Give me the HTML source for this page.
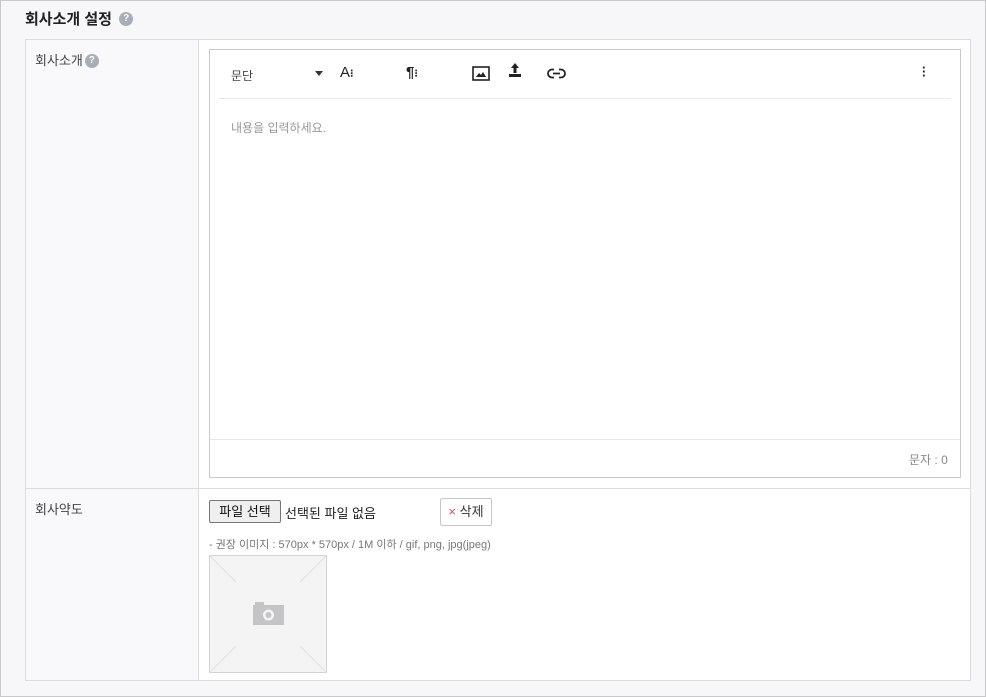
<!DOCTYPE html>
<html><head><meta charset="utf-8"><style>
*{box-sizing:border-box;margin:0;padding:0}
body{width:986px;height:697px;background:#f7f7f9;font-family:"Liberation Sans","Noto Sans CJK KR",sans-serif;color:#333;position:relative;overflow:hidden}
.abs{position:absolute}
.q{display:inline-block;width:14px;height:14px;border-radius:50%;background:#a8aeb8;color:#fff;font-size:10px;font-weight:bold;text-align:center;line-height:14px;vertical-align:middle}
</style></head><body>
<div class="abs" style="left:0;top:0;width:986px;height:697px;border:1px solid #c9c9cc"></div>
<div class="abs" style="left:25px;top:8px;font-size:15px;font-weight:bold;color:#222">회사소개 설정 <span class="q" style="margin-left:3px;margin-top:-3px">?</span></div>
<div class="abs" style="left:25px;top:39px;width:946px;height:642px;border:1px solid #dcdde0;background:#fff"></div>
<div class="abs" style="left:26px;top:40px;width:173px;height:640px;background:#f9f9fb;border-right:1px solid #dcdde0"></div>
<div class="abs" style="left:26px;top:488px;width:944px;height:1px;background:#dcdde0"></div>
<div class="abs" style="left:35px;top:50px;font-size:13px;color:#444">회사소개<span class="q" style="margin-left:2px;margin-top:-2px">?</span></div>
<div class="abs" style="left:35px;top:499px;font-size:13px;color:#444">회사약도</div>
<div class="abs" style="left:209px;top:49px;width:752px;height:429px;border:1px solid #c9cacd"></div>
<div class="abs" style="left:219px;top:98px;width:732px;height:1px;background:#e8e8ea"></div>
<div class="abs" style="left:210px;top:439px;width:750px;height:1px;background:#e8e8ea"></div>
<div class="abs" style="left:231px;top:67px;font-size:12px;color:#444">문단</div>
<div class="abs" style="left:315px;top:71px;width:0;height:0;border-left:4px solid transparent;border-right:4px solid transparent;border-top:5px solid #333"></div>
<div class="abs" style="left:340px;top:64px;font-size:15px;color:#222">A<span style="font-size:11px;font-weight:bold">⁝</span></div>
<div class="abs" style="left:406px;top:64px;font-size:15px;font-weight:bold;color:#222">¶<span style="font-size:11px">⁝</span></div>
<svg class="abs" style="left:472px;top:66px" width="18" height="15" viewBox="0 0 18 15"><rect x="1" y="1" width="16" height="13" fill="none" stroke="#222" stroke-width="1.6"/><path d="M4 11l3-4 2 2 2-3 3 5z" fill="#222"/></svg>
<svg class="abs" style="left:508px;top:62px" width="14" height="16" viewBox="0 0 14 16"><path d="M7 1l4 5H8.5v5h-3V6H3z" fill="#222"/><rect x="1" y="12" width="12" height="3" fill="#222"/></svg>
<svg class="abs" style="left:547px;top:67px" width="19" height="13" viewBox="0 0 19 13"><path d="M7 2.5H5a4 4 0 000 8h2M12 2.5h2a4 4 0 010 8h-2M6 6.5h7" fill="none" stroke="#222" stroke-width="1.8"/></svg>
<div class="abs" style="left:922px;top:66px;width:3px;font-size:13px;line-height:4px;color:#222;font-weight:bold">·<br>·<br>·</div>
<div class="abs" style="left:231px;top:119px;font-size:12px;color:#999">내용을 입력하세요.</div>
<div class="abs" style="left:909px;top:451px;font-size:12px;color:#888">문자 : 0</div>
<div class="abs" style="left:209px;top:500px;width:72px;height:23px;border:1px solid #767676;border-radius:2px;background:#efefef;font-size:13px;text-align:center;line-height:21px;color:#111">파일 선택</div>
<div class="abs" style="left:285px;top:503px;font-size:13px;color:#222">선택된 파일 없음</div>
<div class="abs" style="left:440px;top:498px;width:52px;height:28px;border:1px solid #c6c7ca;border-radius:2px;background:#fff;font-size:13px;line-height:26px;text-align:center;color:#333"><span style="color:#d9534f">×</span> 삭제</div>
<div class="abs" style="left:209px;top:536px;font-size:11px;color:#777">- 권장 이미지 : 570px * 570px / 1M 이하 / gif, png, jpg(jpeg)</div>
<svg class="abs" style="left:209px;top:555px" width="118" height="118" viewBox="0 0 118 118"><rect x=".5" y=".5" width="117" height="117" fill="#f4f4f5" stroke="#d3d3d5"/><path d="M1 1l26 26M117 1L91 27M1 117l26-26M117 117L91 91" stroke="#dedee0"/><rect x="44" y="50" width="31" height="20" fill="#c4c4c6"/><rect x="46" y="47" width="9" height="4" fill="#c4c4c6"/><circle cx="59.5" cy="60" r="5.5" fill="#f4f4f5"/><circle cx="59.5" cy="60" r="3" fill="#c4c4c6"/></svg>
</body></html>
